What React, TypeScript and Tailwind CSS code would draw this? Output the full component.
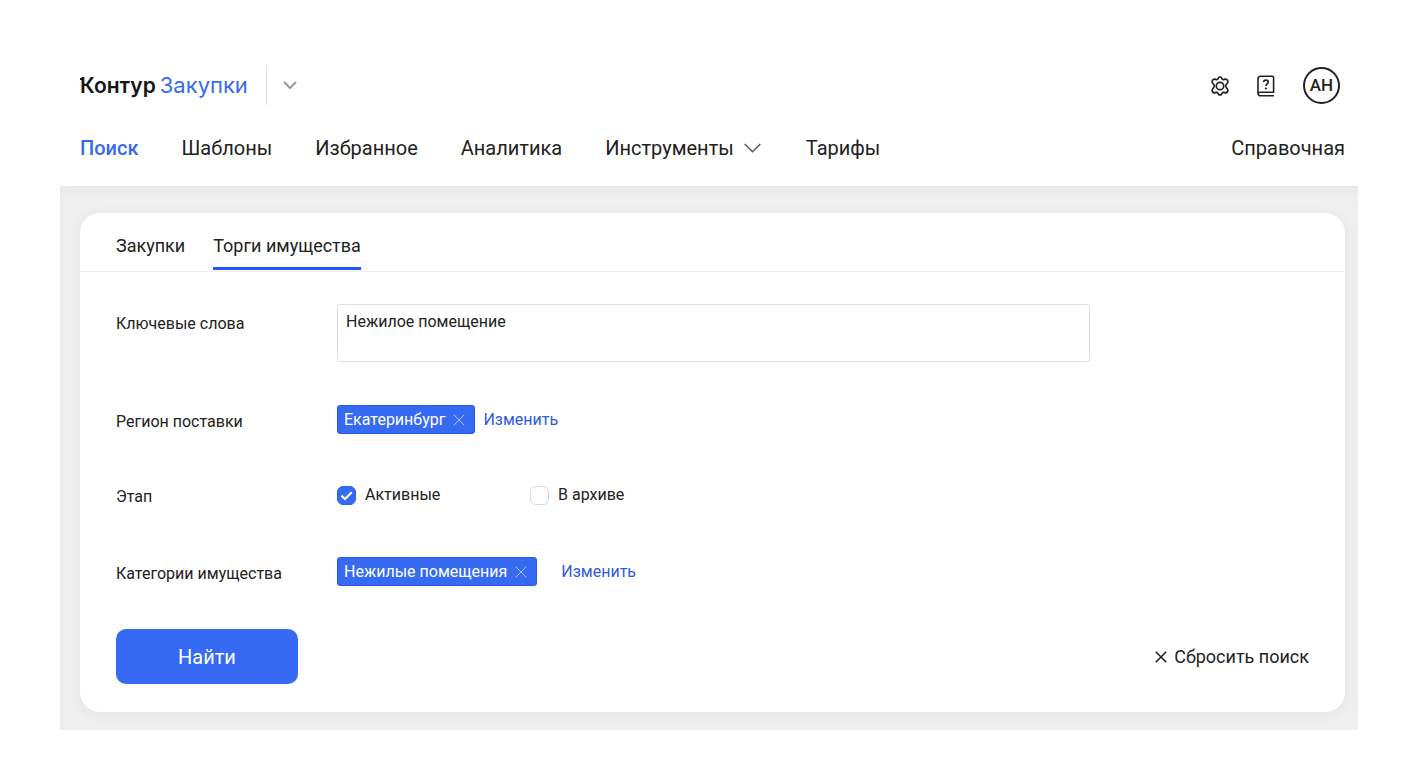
import type { ReactNode } from "react";

const navItems = [
  { label: "Поиск", active: true },
  { label: "Шаблоны" },
  { label: "Избранное" },
  { label: "Аналитика" },
  { label: "Инструменты", menu: true },
  { label: "Тарифы" },
];

const tabs = [
  { label: "Закупки", active: false },
  { label: "Торги имущества", active: true },
];

function GearIcon() {
  return (
    <svg className="size-5" viewBox="0 0 20 20" fill="none" stroke="currentColor" strokeWidth="1.7" strokeLinejoin="round" aria-hidden="true">
      <path d="M8.1 2.5 Q8.4 1 10 1 Q11.6 1 11.9 2.5 Q12.3 4 13.8 3.6 L15.2 3.1 Q16.7 2.9 17.5 4.2 Q18.5 5.9 17.4 7 L16.3 8.2 Q14.9 10 16.3 11.8 L17.4 13 Q18.5 14.1 17.5 15.8 Q16.7 17.1 15.2 16.9 L13.8 16.4 Q12.3 16 11.9 17.5 Q11.6 19 10 19 Q8.4 19 8.1 17.5 Q7.7 16 6.2 16.4 L4.8 16.9 Q3.3 17.1 2.5 15.8 Q1.5 14.1 2.6 13 L3.7 11.8 Q5.1 10 3.7 8.2 L2.6 7 Q1.5 5.9 2.5 4.2 Q3.3 2.9 4.8 3.1 L6.2 3.6 Q7.7 4 8.1 2.5 Z" />
      <circle cx="10" cy="10" r="3.7" />
    </svg>
  );
}

function HelpBookIcon() {
  return (
    <svg className="h-[22px] w-[18px]" viewBox="0 0 18 22" fill="none" stroke="currentColor" strokeWidth="1.6" aria-hidden="true">
      <path d="M17 20.7 H4 Q1 20.7 1 18.4 V4 Q1 1.2 3.6 1.2 H15.2 Q16.6 1.2 16.6 2.6 V17.2 H3.2 Q1 17.2 1 19" />
      <path d="M6.6 7.2 Q6.8 5.1 8.9 5.1 Q11.2 5.1 11.2 7.1 Q11.2 8.3 10 9 Q8.9 9.7 8.9 11" />
      <circle cx="8.9" cy="13.5" r="1.1" fill="currentColor" stroke="none" />
    </svg>
  );
}

function Cross({ className }: { className: string }) {
  return (
    <svg className={className} viewBox="0 0 12 12" fill="none" stroke="currentColor" aria-hidden="true">
      <path d="M0.8 0.8 L11.2 11.2 M11.2 0.8 L0.8 11.2" />
    </svg>
  );
}

function Chip({ children }: { children: ReactNode }) {
  return (
    <span className="flex h-[29px] items-center gap-2 rounded-[3px] border border-[#2457ea] bg-[#366af3] pr-[9px] pl-1.5 text-white">
      {children}
      <button type="button" aria-label="Удалить" className="text-[#a9c0fb]">
        <Cross className="size-3" />
      </button>
    </span>
  );
}

function Check({ label, defaultChecked }: { label: string; defaultChecked?: boolean }) {
  return (
    <label className="flex items-center gap-[9px]">
      <span className="grid size-[19px]">
        <input
          type="checkbox"
          defaultChecked={defaultChecked}
          className="peer col-start-1 row-start-1 size-[19px] appearance-none rounded-[6px] border border-[#d9d9d9] bg-white checked:border-[#2f64f2] checked:bg-[#366af3]"
        />
        <svg
          className="pointer-events-none invisible col-start-1 row-start-1 size-[19px] peer-checked:visible"
          viewBox="0 0 19 19"
          fill="none"
          stroke="white"
          strokeWidth="2.2"
          aria-hidden="true"
        >
          <path d="M4.4 9.6 L8 13 L14.8 6.2" />
        </svg>
      </span>
      {label}
    </label>
  );
}

export default function App() {
  return (
    <div className="min-h-screen bg-white px-[60px] pt-[65px] pb-[54px] font-['Roboto','Liberation_Sans',sans-serif] text-[#222]">
      {/* Header */}
      <header className="pr-[13px] pl-5">
        <div className="flex h-10 items-center justify-between">
          <div className="flex h-10 items-center">
            <a href="#" className="relative flex items-baseline gap-1 font-['Inter',sans-serif] text-[22px] leading-10">
              {/* flag on the first letter of the logo */}
              <span className="absolute top-[13px] left-0 h-0.5 w-1 bg-[#151515]" />
              <span className="text-[21px] font-semibold text-[#151515]">Контур</span>
              <span className="text-[#366af3]">Закупки</span>
            </a>
            <span className="ml-[18px] h-10 w-px bg-[#e3e3e3]" />
            <button type="button" aria-label="Сервисы" className="ml-4 text-[#999]">
              <svg className="h-2.5 w-3.5" viewBox="0 0 14 10" fill="none" stroke="currentColor" strokeWidth="2" aria-hidden="true">
                <path d="M1 2 L7 8 L13 2" />
              </svg>
            </button>
          </div>
          <div className="flex items-center pt-px pr-[5px]">
            <button type="button" aria-label="Настройки">
              <GearIcon />
            </button>
            <button type="button" aria-label="Помощь" className="ml-[27px]">
              <HelpBookIcon />
            </button>
            <button type="button" className="ml-7 size-[37px] rounded-full border-2 border-[#222] text-[17px] font-medium">
              АН
            </button>
          </div>
        </div>

        <nav className="flex h-[81px] items-center justify-between pt-1 text-xl">
          <ul className="flex items-center gap-[43px]">
            {navItems.map((item) => (
              <li key={item.label}>
                <a href="#" className={item.active ? "font-medium text-[#366af3]" : "flex items-center gap-2.5"}>
                  {item.label}
                  {item.menu && (
                    <svg className="mr-0.5 h-2.5 w-[17px]" viewBox="0 0 17 10" fill="none" stroke="#555" strokeWidth="1.5" aria-hidden="true">
                      <path d="M0.7 1 L8.5 8.7 L16.3 1" />
                    </svg>
                  )}
                </a>
              </li>
            ))}
          </ul>
          <a href="#">Справочная</a>
        </nav>
      </header>

      {/* Search */}
      <main className="bg-[#efefef] pt-[27px] pr-[13px] pb-[18px] pl-5 shadow-[inset_0_12px_16px_-10px_rgba(0,0,0,0.05)]">
        <form className="rounded-[20px] bg-white shadow-[0_2px_16px_rgba(0,0,0,0.05)]" onSubmit={(e) => e.preventDefault()}>
          <div className="flex h-[59px] gap-7 border-b border-[#f0f0f0] px-9 text-lg">
            {tabs.map((tab) => (
              <button
                key={tab.label}
                type="button"
                className={tab.active ? "h-[57px] border-b-3 border-[#2457f5] pt-3" : "h-[57px] border-b-3 border-transparent pt-3"}
              >
                {tab.label}
              </button>
            ))}
          </div>

          <div className="px-9 pt-8 pb-7 text-base">
            <div className="grid grid-cols-[221px_minmax(0,753px)]">
              <label htmlFor="keywords" className="pt-2">
                Ключевые слова
              </label>
              <textarea
                id="keywords"
                defaultValue="Нежилое помещение"
                className="block h-[58px] resize-none rounded-[3px] border border-[#dedede] px-2 pt-[5px] outline-none"
              />
            </div>

            <div className="mt-[43px] grid grid-cols-[221px_1fr] items-center">
              <span className="pt-1">Регион поставки</span>
              <div className="flex items-center gap-2">
                <Chip>Екатеринбург</Chip>
                <button type="button" className="text-[#2f5be0]">
                  Изменить
                </button>
              </div>
            </div>

            <div className="mt-[47px] grid grid-cols-[221px_1fr] items-center">
              <span className="pt-1">Этап</span>
              <div className="flex items-center">
                <div className="w-[193px]">
                  <Check label="Активные" defaultChecked />
                </div>
                <Check label="В архиве" />
              </div>
            </div>

            <div className="mt-12 grid grid-cols-[221px_1fr] items-center">
              <span className="pt-1">Категории имущества</span>
              <div className="flex items-center gap-6">
                <Chip>Нежилые помещения</Chip>
                <button type="button" className="text-[#2f5be0]">
                  Изменить
                </button>
              </div>
            </div>

            <div className="mt-[43px] flex items-center justify-between">
              <button type="submit" className="h-[55px] w-[182px] rounded-[10px] bg-[#366af3] text-xl text-white">
                Найти
              </button>
              <button type="reset" className="flex items-center gap-[7px] text-lg">
                <Cross className="size-3 stroke-[1.6]" />
                Сбросить поиск
              </button>
            </div>
          </div>
        </form>
      </main>
    </div>
  );
}
